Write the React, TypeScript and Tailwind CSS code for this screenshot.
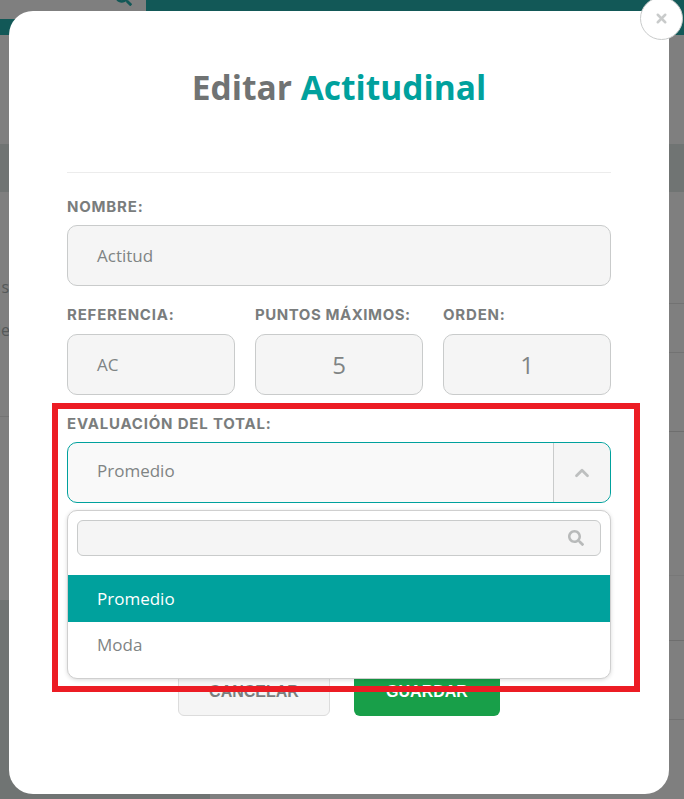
import { ChevronUp, X } from 'lucide-react';
import { FaSearch } from 'react-icons/fa';

const label = "block font-['Inter','Liberation_Sans',sans-serif] text-[15px] font-bold leading-[18px] tracking-[0.8px] text-[#7a7d7d]";
const field = "flex h-[61px] items-center rounded-[10px] border border-[#c9cbcb] bg-[#f5f5f5] text-[#7f8484]";

function Backdrop() {
    return (
        <div className="flex h-full w-full flex-col bg-[#7f7f7f] font-['Open_Sans',sans-serif]">
            {/* Header */}
            <div className="flex h-[35px]">
                <div className="flex w-[146px] flex-col">
                    <div className="flex h-[19px] justify-end overflow-hidden pr-[14px]">
                        <FaSearch className="mt-[-11px] h-[17px] w-[17px] text-[#125857]" />
                    </div>
                    <div className="h-[16px] bg-[#125857]" />
                </div>
                <div className="flex-1 bg-[#125857]" />
            </div>
            <div className="h-[109px]" />
            <div className="h-[48px] bg-[#707473]" />

            {/* Table rows */}
            <div className="flex h-[408px]">
                <div className="w-[9px] overflow-hidden">
                    <div className="flex h-[225px] flex-col items-end border-b border-[#747474] pt-[85px] text-[16px] leading-[20px] text-[#555959]">
                        <span>s</span>
                        <span className="mt-[23px] mr-[-1px]">le</span>
                    </div>
                </div>
                <div className="flex-1">
                    <div className="h-[112px] border-b border-[#727272]" />
                    <div className="h-[49px] border-b border-[#727272]" />
                    <div className="h-[79px] border-b border-[#6e6e6e]" />
                    <div className="h-[144px] border-b border-[#787878]" />
                </div>
            </div>

            <div className="flex h-[199px]">
                <div className="w-[210px] bg-[#707473]" />
                <div className="flex-1">
                    <div className="h-[41px] border-b border-[#6e6e6e]" />
                    <div className="h-[79px] border-b border-[#727272]" />
                </div>
            </div>
        </div>
    );
}

function Modal() {
    return (
        <div className="absolute top-[11px] left-[9px] h-[783px] w-[660px] rounded-[24px] bg-white px-[58px] pt-[54px] font-['Open_Sans',sans-serif]">
            <h1 className="text-center text-[33.5px] leading-[44px] font-bold text-[#707373]">
                Editar <span className="text-[#00a19d]">Actitudinal</span>
            </h1>
            <div className="mt-[63px] border-t border-[#ececec]" />

            <label className={`${label} mt-[25px]`}>NOMBRE:</label>
            <div className={`${field} mt-[9px] px-[29px] text-[17px]`}>Actitud</div>

            <div className="mt-[20px] grid grid-cols-3 gap-x-[20px]">
                <div>
                    <label className={`${label} whitespace-nowrap`}>REFERENCIA:</label>
                    <div className={`${field} mt-[10px] px-[29px] text-[17px]`}>AC</div>
                </div>
                <div>
                    <label className={`${label} whitespace-nowrap !tracking-[0.55px]`}>PUNTOS MÁXIMOS:</label>
                    <div className={`${field} mt-[10px] justify-center text-[24px]`}>5</div>
                </div>
                <div>
                    <label className={`${label} whitespace-nowrap`}>ORDEN:</label>
                    <div className={`${field} mt-[10px] justify-center text-[24px]`}>1</div>
                </div>
            </div>

            <label className={`${label} mt-[20px]`}>EVALUACIÓN DEL TOTAL:</label>
            <div className="mt-[9px] flex h-[61px] items-stretch rounded-[10px] border border-[#00a19d] bg-[#f9f9f9] text-[17px] text-[#7f8484]">
                <div className="flex flex-1 items-center px-[29px] pb-[3px]">Promedio</div>
                <div className="flex w-[57px] items-center justify-center rounded-r-[10px] border-l border-[#c9cbcb] bg-[#f5f5f5]">
                    <ChevronUp className="h-[22px] w-[22px] text-[#bdbfbf]" strokeWidth={3} />
                </div>
            </div>

            {/* Buttons sit under the open list */}
            <div className="mt-[165px] flex justify-center gap-x-[24px] font-['Liberation_Sans',sans-serif] text-[16px] font-bold">
                <button className="flex h-[48px] w-[152px] items-center justify-center rounded-[6px] border border-[#dcdcdc] bg-[#f5f5f5] text-[#7a7d7d]">CANCELAR</button>
                <button className="flex h-[48px] w-[146px] items-center justify-center rounded-[6px] bg-[#189f49] text-white">GUARDAR</button>
            </div>

            {/* Open dropdown list */}
            <div className="absolute top-[499px] left-[58px] h-[169px] w-[544px] rounded-[10px] border border-[#cfcfcf] bg-white shadow-[0_1px_4px_rgba(0,0,0,0.15)]">
                <div className="mx-[9px] mt-[9px] flex h-[36px] items-center justify-end rounded-[6px] border border-[#c9cbcb] bg-[#f5f5f5] pr-[16px]">
                    <FaSearch className="h-[16px] w-[16px] text-[#b8baba]" />
                </div>
                <div className="mt-[19px] flex h-[47px] items-center bg-[#00a19d] px-[29px] text-[17px] text-white">Promedio</div>
                <div className="flex h-[46px] items-center px-[29px] text-[17px] text-[#7f8484]">Moda</div>
            </div>
        </div>
    );
}

export default function App() {
    return (
        <div className="relative h-[799px] w-[684px] overflow-hidden">
            <Backdrop />
            <Modal />

            {/* Close button */}
            <button className="absolute top-[-3px] left-[640px] flex h-[43px] w-[43px] items-center justify-center rounded-full border border-[#c9cbcb] bg-white">
                <X className="h-[15px] w-[15px] text-[#c9cbcb]" strokeWidth={4} />
            </button>

            {/* Red highlight */}
            <div className="absolute top-[403px] left-[52px] h-[289px] w-[588px] border-[6px] border-[#ec1c24]" />
        </div>
    );
}
